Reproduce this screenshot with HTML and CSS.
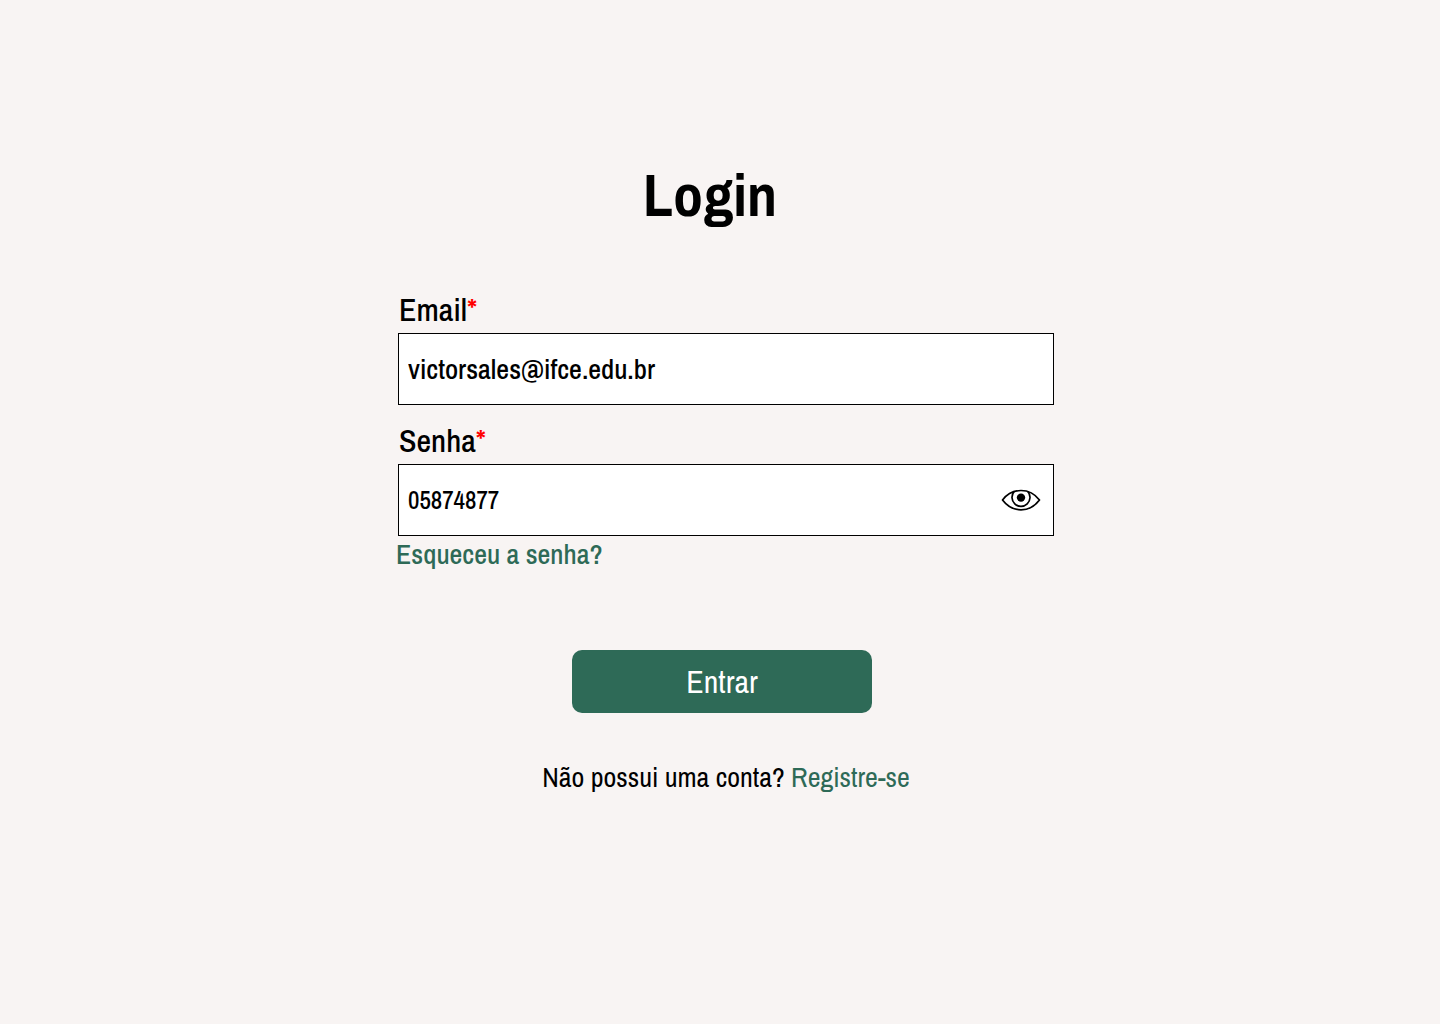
FILE: index.html
```html
<!DOCTYPE html>
<html lang="pt-BR">
<head>
  <meta charset="utf-8">
  <meta name="viewport" content="width=device-width, initial-scale=1">
  <title>Login</title>
  <link rel="stylesheet" href="styles.css">
</head>
<body>
  <main class="page">
    <form class="login">
      <h1 class="title">Login</h1>
      <div class="field">
        <label class="label" for="email">Email<span class="required">*</span></label>
        <div class="control">
          <input class="input" id="email" type="email" value="victorsales@ifce.edu.br" required>
        </div>
      </div>
      <div class="field">
        <label class="label" for="senha">Senha<span class="required">*</span></label>
        <div class="control">
          <input class="input input-code" id="senha" type="text" value="05874877" required>
          <button class="toggle" type="button" aria-label="Mostrar senha">
            <svg class="eye" viewBox="0 0 40 24" aria-hidden="true">
              <path d="M1.500 12C6.500 5.500 13 2.500 20 2.500s13.500 3 18.500 9.500C33.500 18.500 27 21.800 20 21.800S6.500 18.500 1.500 12Z" fill="none" stroke="currentColor" stroke-width="1.700" stroke-linejoin="round"/>
              <path d="M13.200 3.500a9 9 0 1 0 13.600 0" fill="none" stroke="currentColor" stroke-width="1.700"/>
              <circle cx="20" cy="9.600" r="4.200" fill="currentColor"/>
            </svg>
          </button>
        </div>
      </div>
      <a class="link forgot" href="#recuperar">Esqueceu a senha?</a>
      <button class="submit" type="submit">Entrar</button>
      <p class="register">Não possui uma conta? <a class="link" href="#registro">Registre-se</a></p>
    </form>
  </main>
</body>
</html>
```
FILE: styles.css
```css
* {
  box-sizing: border-box;
}

body {
  margin: 0;
  background: #f8f4f3;
  color: #000;
  font-family: "Archivo Narrow", "Liberation Sans Narrow", "Liberation Sans", sans-serif;
  font-size: 28px;
  line-height: 32px;
}

.page {
  display: flex;
  justify-content: center;
  padding: 159px 16px 64px 28px;
}

.login {
  display: flex;
  flex-direction: column;
  width: 100%;
  max-width: 656px;
}

.title {
  margin: 0 0 60px;
  padding-right: 32px;
  font-size: 60px;
  line-height: 72px;
  font-weight: 700;
  text-align: center;
}

.field {
  display: flex;
  flex-direction: column;
  margin-bottom: 17px;
}

.label {
  padding: 0 0 5px 1px;
  font-size: 32px;
  line-height: 37px;
  font-weight: 500;
}

.required {
  color: #f00;
}

.control {
  display: flex;
  align-items: center;
  height: 72px;
  padding: 0 12px 0 9px;
  border: 1px solid #000;
  background: #fff;
}

.input {
  flex: 1;
  min-width: 0;
  padding: 0;
  border: 0;
  outline: 0;
  background: transparent;
  color: inherit;
  font: inherit;
  font-weight: 500;
}

.input-code {
  font-size: 25px;
}

.toggle {
  display: flex;
  padding: 0;
  border: 0;
  background: none;
  color: inherit;
  cursor: pointer;
}

.eye {
  width: 40px;
  height: 24px;
}

.link {
  color: #2e6a57;
  text-decoration: none;
}

.forgot {
  align-self: flex-start;
  margin: -15px 0 0 -2px;
  font-weight: 500;
}

.submit {
  align-self: center;
  width: 300px;
  max-width: 100%;
  height: 63px;
  margin: 80px 8px 0 0;
  border: 0;
  border-radius: 10px;
  background: #2e6a57;
  color: #fff;
  font-family: inherit;
  font-size: 32px;
  cursor: pointer;
}

.register {
  margin: 48px 0 0;
  text-align: center;
}
```
